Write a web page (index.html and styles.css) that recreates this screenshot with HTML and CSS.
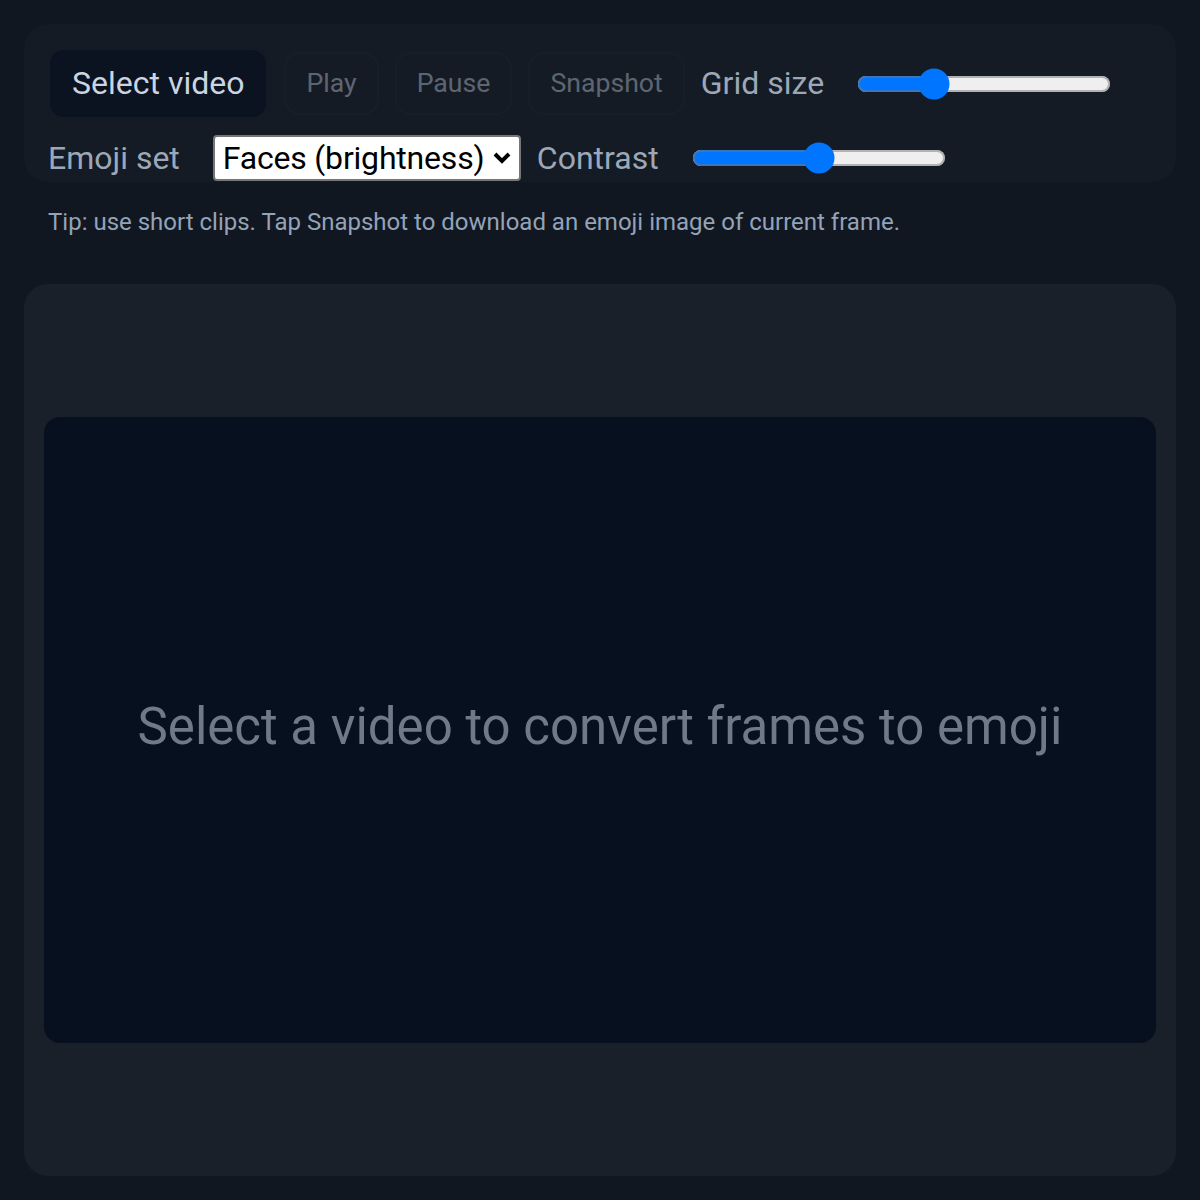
FILE: index.html
```html
<!DOCTYPE html>
<html lang="en">
<head>
    <meta charset="UTF-8">
    <meta name="viewport" content="width=device-width, initial-scale=1.0">
    <title>Video to Emoji</title>
    <link rel="stylesheet" href="styles.css">
</head>
<body>
    <header class="toolbar">
        <label class="btn" for="videoFile">Select video</label>
        <input type="file" id="videoFile" accept="video/*" class="hidden">
        <button class="btn small" id="playBtn" disabled>Play</button>
        <button class="btn small" id="pauseBtn" disabled>Pause</button>
        <button class="btn small" id="snapBtn" disabled>Snapshot</button>

        <div class="field">
            <label for="gridSize">Grid size</label>
            <input type="range" id="gridSize" min="10" max="120" value="40">
        </div>

        <div class="field">
            <label for="emojiSet">Emoji set</label>
            <select id="emojiSet">
                <option value="faces">Faces (brightness)</option>
                <option value="blocks">Blocks</option>
                <option value="moons">Moons</option>
            </select>
        </div>

        <div class="field">
            <label for="contrast">Contrast</label>
            <input type="range" id="contrast" min="0" max="200" value="100">
        </div>
    </header>

    <p class="tip">Tip: use short clips. Tap Snapshot to download an emoji image of current frame.</p>

    <main class="stage">
        <div class="screen" id="output">
            <span class="placeholder">Select a video to convert frames to emoji</span>
        </div>
    </main>
</body>
</html>
```

FILE: styles.css
```css
body {
    margin: 0;
    padding: 24px;
    background-color: #111720;
    font-family: Roboto, "Liberation Sans", sans-serif;
    color: #cbd5e1;
}

.hidden {
    display: none;
}

.toolbar {
    display: flex;
    flex-wrap: wrap;
    align-items: center;
    column-gap: 16px;
    row-gap: 16px;
    padding: 24px 24px 1px;
    background-color: #141b24;
    border-radius: 24px;
}

.btn {
    display: inline-block;
    padding: 15px 22px;
    font-family: Roboto, "Liberation Sans", sans-serif;
    font-size: 32px;
    line-height: 37px;
    color: #cbd5e1;
    background-color: #0b1220;
    border: 2px solid #131b28;
    border-radius: 16px;
    cursor: pointer;
}

.btn.small {
    padding: 14px 20px;
    font-size: 26.67px;
    line-height: 31px;
}

.btn:disabled {
    opacity: 0.4;
    background-color: transparent;
    border-color: #1c2430;
    cursor: default;
}

.field {
    display: flex;
    align-items: center;
    gap: 33px;
}

.field label {
    font-size: 32px;
    line-height: 37px;
    color: #9ca8b8;
}

input[type="range"] {
    zoom: 2;
    width: 127px;
    margin: 0;
}

select {
    zoom: 2;
    width: 154px;
    margin: 0;
    padding: 1px 16px 1px 4px;
    font-family: Roboto, "Liberation Sans", sans-serif;
    font-size: 16px;
    letter-spacing: -0.1px;
    color: #000;
    background: #fff url("data:image/svg+xml,%3Csvg xmlns='http://www.w3.org/2000/svg' width='9' height='6' viewBox='0 0 9 6'%3E%3Cpath d='M1 1 4.5 4.5 8 1' fill='none' stroke='%23000' stroke-width='2'/%3E%3C/svg%3E") no-repeat right 4px center;
    border: 1px solid #767676;
    border-radius: 2px;
    appearance: none;
    -webkit-appearance: none;
}

.tip {
    margin: 27px 24px 0;
    font-size: 24px;
    line-height: 26px;
    color: #94a3b8;
}

.stage {
    display: flex;
    align-items: center;
    height: 892px;
    box-sizing: border-box;
    margin-top: 49px;
    padding: 0 20px;
    background-color: #19202a;
    border-radius: 24px;
}

.screen {
    display: flex;
    align-items: center;
    justify-content: center;
    width: 100%;
    aspect-ratio: 16 / 9;
    background-color: #07101e;
    border-radius: 16px;
}

.placeholder {
    margin-top: -8px;
    font-size: 51px;
    color: #6f7988;
}
```
